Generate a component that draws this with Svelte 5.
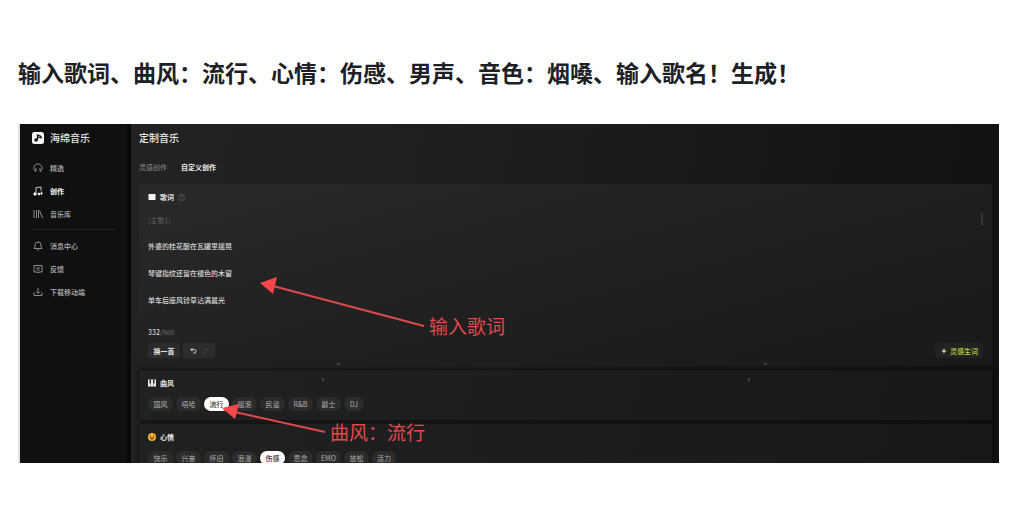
<script lang="ts">
	const mainNav = [
		{ icon: 'headphones', label: '精选' },
		{ icon: 'notes', label: '创作', active: true },
		{ icon: 'library', label: '音乐库' }
	];
	const moreNav = [
		{ icon: 'bell', label: '消息中心' },
		{ icon: 'feedback', label: '反馈' },
		{ icon: 'download', label: '下载移动端' }
	];

	const genres = ['国风', '嘻哈', '流行', '摇滚', '民谣', 'R&B', '爵士', 'DJ'];
	const moods = ['快乐', '兴奋', '怀旧', '浪漫', '伤感', '思念', 'EMO', '放松', '活力'];

	let genre = $state('流行');
	let mood = $state('伤感');
	let lyrics = $state('外婆的桂花酿在瓦罐里摇晃\n琴键指纹还留在褪色的木窗\n单车后座风铃草沾满晨光');
</script>

{#snippet navItem(item)}
	<a class="nav-item" class:active={item.active} href="#{item.icon}">
		<svg viewBox="0 0 20 20" aria-hidden="true">
			{#if item.icon === 'headphones'}
				<path d="M6 17C2 15 1 12 2 8.500C3 4.500 6 2 10 2S17 4.500 18 8.500C19 12 18 15 14 17M6 10V17M14 10V17" />
			{:else if item.icon === 'notes'}
				<path d="M6 15V3L16 2V9" />
				<circle class="dot" cx="4" cy="16" r="2.500" />
				<circle class="dot" cx="12" cy="16" r="2" />
				<path d="M17 11V18M14 14.500H20" />
			{:else if item.icon === 'library'}
				<path d="M2 2V18M7 2V18M11 2V18M13 3L19 18" />
			{:else if item.icon === 'bell'}
				<path d="M2 15H18L16 12V8A6 6 0 0 0 4 8V12ZM8 18H12M10 1V2" />
			{:else if item.icon === 'feedback'}
				<path d="M2 3H18V16H12L10 18L8 16H2ZM6 8H14M7 12H13" />
			{:else}
				<path d="M10 2V12M6 9L10 13L14 9M2 11V17H18V11" />
			{/if}
		</svg>
		<span>{item.label}</span>
	</a>
{/snippet}

<article>
	<h1>输入歌词、曲风：流行、心情：伤感、男声、音色：烟嗓、输入歌名！生成！</h1>

	<div class="figure">
		<aside>
			<div class="brand">
				<svg viewBox="0 0 24 24" aria-hidden="true">
					<rect width="24" height="24" rx="5" fill="#f5f5f5" />
					<path d="M11 16V6L18 9V12L12 10" fill="none" stroke="#111" stroke-width="2.500" />
					<circle cx="8" cy="16" r="3.500" fill="#111" />
				</svg>
				<span>海绵音乐</span>
			</div>
			<nav>
				{#each mainNav as item}
					{@render navItem(item)}
				{/each}
				<hr />
				{#each moreNav as item}
					{@render navItem(item)}
				{/each}
			</nav>
		</aside>

		<main>
			<h2>定制音乐</h2>
			<div class="tabs">
				<button>灵感创作</button>
				<button class="active">自定义创作</button>
			</div>

			<section class="card lyrics">
				<h3>
					<svg viewBox="0 0 16 16" aria-hidden="true"><rect x="1" y="2" width="14" height="12" fill="#f4f4f4" /></svg>
					<label for="lyrics">歌词</label>
					<svg class="info" viewBox="0 0 16 16" aria-hidden="true">
						<circle cx="8" cy="8" r="7" />
						<path d="M6 6C6 3 10 3 10 6C10 8 8 7 8 10M8 11V13" />
					</svg>
				</h3>
				<div class="editor">
					<div class="verse">
						<span class="tag">[主歌1]</span>
						<textarea id="lyrics" rows="3" bind:value={lyrics}></textarea>
					</div>
					<span class="thumb"></span>
				</div>
				<div class="count"><b>332</b>/500</div>
				<div class="actions">
					<button class="tool">换一首</button>
					<div class="tool history">
						<button aria-label="撤销">
							<svg viewBox="0 0 16 16"><path d="M6 2L2 6L6 10M2 6H10A4 4 0 0 1 10 14H7" /></svg>
						</button>
						<button aria-label="重做" disabled>
							<svg viewBox="0 0 16 16"><path d="M10 2L14 6L10 10M14 6H6A4 4 0 0 0 6 14H9" /></svg>
						</button>
					</div>
					<button class="tool generate">
						<svg viewBox="0 0 16 16" aria-hidden="true"><path d="M8 0L10 6L16 8L10 10L8 16L6 10L0 8L6 6Z" /></svg>
						灵感生词
					</button>
				</div>
			</section>

			<section class="card">
				<h3>
					<svg viewBox="0 0 16 16" aria-hidden="true">
						<rect y="1" width="16" height="14" fill="#eee" />
						<path d="M3 1H6V9H3ZM10 1H13V9H10Z" fill="#222" />
						<path d="M5 9V15M11 9V15" stroke="#555" />
					</svg>
					<span>曲风</span>
				</h3>
				<div class="chips">
					{#each genres as name}
						<button class="chip" class:selected={genre === name} onclick={() => (genre = name)}>{name}</button>
					{/each}
				</div>
			</section>

			<section class="card">
				<h3>
					<svg viewBox="0 0 16 16" aria-hidden="true">
						<circle cx="8" cy="8" r="8" fill="#f5b72f" />
						<path d="M3 6H6M10 6H13" stroke="#5f3510" stroke-width="2" />
						<path d="M4 9H12C12 14 4 14 4 9Z" fill="#743819" />
					</svg>
					<span>心情</span>
				</h3>
				<div class="chips">
					{#each moods as name}
						<button class="chip" class:selected={mood === name} onclick={() => (mood = name)}>{name}</button>
					{/each}
				</div>
			</section>
		</main>

		<!-- tutorial callouts over the app -->
		<svg class="arrows" width="760" height="339" viewBox="0 0 760 339" aria-hidden="true">
			<path d="M404 202L253 162M305 308L215 288" stroke="#df484c" stroke-width="2" />
			<path d="M240 159L257 153L253 170ZM202 284L219 280L215 295Z" fill="#f7474b" />
			<path d="M317 240H320M744 240H747M303 254V257M729 254V257" stroke="#666" />
		</svg>
		<span class="note note-lyrics">输入歌词</span>
		<span class="note note-genre">曲风：流行</span>
	</div>
</article>

<style>
	:global(body) { margin: 0; background: #fff; }
	article {
		padding: 54px 15px 44px 18px;
		font-family: 'Noto Sans CJK SC', sans-serif;
	}
	h1, h2, h3 { margin: 0; }
	h1 {
		margin-bottom: 34px;
		font-size: 23px; line-height: 36px; font-weight: 700; color: #1d2025;
	}

	.figure {
		position: relative; display: flex; overflow: hidden;
		aspect-ratio: 979 / 339;
		border-left: 2px solid #e2e2e2;
		background: #090909; color: #ddd;
		font-size: 7px; line-height: 14px;
	}
	button {
		margin: 0; padding: 0; border: 0; background: none;
		font: inherit; color: inherit; cursor: pointer;
	}
	svg { display: block; flex: none; }

	aside {
		flex: none; box-sizing: border-box; width: 107px;
		padding: 6px 11px 0 12px; background: #101010;
	}
	.brand {
		display: flex; align-items: center; gap: 6px;
		margin-bottom: 10px; font-size: 10px; line-height: 16px; color: #e6e6e6;
		font-weight: 500;
	}
	.brand svg { width: 12px; height: 12px; }
	.nav-item {
		display: flex; align-items: center; gap: 7px;
		height: 23px; padding-left: 1px;
		color: #b4b4b4; text-decoration: none; font-weight: 500;
	}
	.nav-item svg {
		width: 10px; height: 10px; overflow: visible;
		fill: none; stroke: currentColor; stroke-width: 1.500;
	}
	.nav-item .dot { fill: currentColor; }
	.nav-item.active { color: #fff; font-weight: 700; }
	hr { margin: 4px 0; border: 0; border-top: 1px solid #242424; }

	main {
		flex: 1; min-width: 0; margin-left: 4px; padding: 6px 7px 0 8px;
		background: linear-gradient(100deg, #222 0%, #1f1f1f 35%, #151515 80%, #111 100%);
	}
	h2 { font-size: 10px; line-height: 16px; font-weight: 500; color: #eee; }
	.tabs { display: flex; gap: 14px; margin: 14px 0 10px; color: #8c8c8c; }
	.tabs .active { color: #eee; font-weight: 700; }

	.card {
		margin-bottom: 4px; padding: 6px 9px 9px;
		border-radius: 2px; box-shadow: 0 0 3px 1px #0e0e0e;
		background: linear-gradient(100deg, #212121, #1d1d1d 45%, #181818);
	}
	.card.lyrics {
		padding-bottom: 8px; box-shadow: none;
		background: linear-gradient(165deg, #2a2a2a, #212121 45%, #191919);
	}
	h3 {
		display: flex; align-items: center; gap: 4px;
		font-size: 7px; line-height: 14px; font-weight: 700; color: #e5e5e5;
	}
	h3 svg { width: 8px; height: 8px; }
	h3 .info { width: 7px; height: 7px; fill: none; stroke: #888; }

	.editor { display: flex; justify-content: space-between; margin-top: 3px; }
	.verse { flex: 1; }
	.tag { display: block; line-height: 26px; color: #606060; }
	textarea {
		display: block; width: 100%; padding: 0; border: 0; outline: 0;
		background: none; resize: none; overflow: hidden;
		font: inherit; font-weight: 500; line-height: 27px; color: #d8d8d8;
	}
	.thumb { width: 2px; height: 13px; margin-top: 6px; background: #343434; border-radius: 1px; }
	.count { margin-top: 11px; color: #777; }
	.count b { color: #ccc; font-weight: 500; }
	.actions { display: flex; gap: 3px; margin-top: 4px; }
	.tool {
		display: flex; align-items: center; justify-content: center; gap: 3px;
		min-width: 32px; height: 15px; border-radius: 2px;
		background: #2c2c2c; color: #e2e2e2; font-weight: 700;
	}
	.history { gap: 5px; }
	.history svg { width: 7px; height: 7px; fill: none; stroke: currentColor; stroke-width: 2; }
	.history button:disabled { color: #444; }
	.generate {
		margin-left: auto; padding: 0 5px 0 6px;
		background: #222; color: #bccf48; font-weight: 500;
	}
	.generate svg { width: 6px; height: 6px; fill: #d8e490; }

	.chips { display: flex; gap: 3px; margin-top: 7px; }
	.chip {
		min-width: 25px; height: 14px; padding: 0 5px; border-radius: 7px;
		background: #2c2c2c; color: #b0b0b0;
	}
	.chip:last-child { min-width: 20px; }
	.chip.selected { background: #fff; color: #333; font-weight: 500; }

	.arrows { position: absolute; top: 0; left: 0; fill: none; pointer-events: none; }
	.note { position: absolute; font-size: 19px; line-height: 28px; color: #e4484c; }
	.note-lyrics { top: 188px; left: 409px; }
	.note-genre { top: 294px; left: 310px; }
</style>
